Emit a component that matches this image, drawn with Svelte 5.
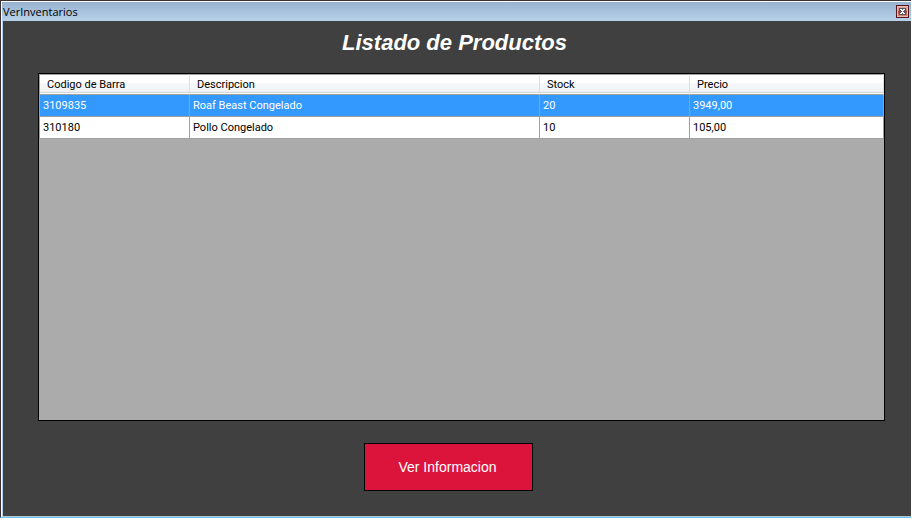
<script>
  const columns = [
    { key: 'codigo', label: 'Codigo de Barra' },
    { key: 'descripcion', label: 'Descripcion' },
    { key: 'stock', label: 'Stock' },
    { key: 'precio', label: 'Precio' }
  ];
  const products = [
    { codigo: '3109835', descripcion: 'Roaf Beast Congelado', stock: '20', precio: '3949,00' },
    { codigo: '310180', descripcion: 'Pollo Congelado', stock: '10', precio: '105,00' }
  ];
  let selected = $state(0);
</script>

<div class="window">
  <header class="titlebar">
    <span class="caption">VerInventarios</span>
    <button class="close" type="button" aria-label="Cerrar">
      <svg width="13" height="13" viewBox="0 0 13 13" shape-rendering="crispEdges">
        <defs>
          <linearGradient id="closeFill" x1="0" y1="0" x2="0" y2="1">
            <stop offset="0" stop-color="#dfa69b" />
            <stop offset="0.45" stop-color="#cf7c6c" />
            <stop offset="0.5" stop-color="#b84a34" />
            <stop offset="1" stop-color="#d48672" />
          </linearGradient>
        </defs>
        <rect width="13" height="13" rx="1" fill="#51191f" />
        <rect x="1" y="1" width="11" height="11" fill="#e5b8b0" />
        <rect x="2" y="2" width="9" height="9" fill="url(#closeFill)" />
        <path d="M3 3h7v7h-7z" fill="#535666" />
        <path d="M4 4h2v1h1v-1h2v1h-1v1h-1v1h1v1h1v1h-2v-1h-1v1h-2v-1h1v-1h1v-1h-1v-1h-1z" fill="#fff" />
      </svg>
    </button>
  </header>

  <main>
    <h1>Listado de Productos</h1>
    <div class="grid">
      <table>
        <colgroup>
          <col class="narrow" />
          <col class="wide" />
          <col class="narrow" />
          <col />
        </colgroup>
        <thead>
          <tr>
            {#each columns as column}
              <th scope="col">{column.label}</th>
            {/each}
          </tr>
        </thead>
        <tbody>
          {#each products as product, i}
            <tr class:selected={selected === i} onclick={() => (selected = i)}>
              {#each columns as column}
                <td>{product[column.key]}</td>
              {/each}
            </tr>
          {/each}
        </tbody>
      </table>
    </div>
    <button class="info" type="button">Ver Informacion</button>
  </main>
</div>

<style>
  :global(body) {
    background: #fff;
  }
  .window {
    box-sizing: border-box;
    margin-right: 1px;
    border-top: 1px solid #3a3134;
    border-left: 1px solid #3a3134;
    border-bottom: 1px solid #6cc5ee;
    background: #404040;
    font-family: 'Liberation Sans', Arial, sans-serif;
  }
  .titlebar {
    display: flex;
    align-items: center;
    justify-content: space-between;
    box-sizing: border-box;
    height: 20px;
    padding: 0 2px 0 1px;
    border-top: 1px solid #fff;
    border-left: 1px solid #fff;
    background: linear-gradient(#98b3d0, #b8d1ea);
  }
  .caption {
    font: 11px/18px 'Open Sans', 'Noto Sans', sans-serif;
    color: #000;
  }
  .close {
    display: flex;
    padding: 0;
    border: 0;
    background: none;
  }
  main {
    display: flex;
    flex-direction: column;
    align-items: center;
    margin-left: 1px;
    padding: 8px 26px 25px 35px;
    border-left: 1px solid #b3cfee;
    border-bottom: 1px solid #b0c4d8;
    box-shadow: -1px 0 #fff;
  }
  h1 {
    margin: 0 14px 16px 0;
    font-size: 22px;
    line-height: 28px;
    font-weight: bold;
    font-style: italic;
    color: #fff;
  }
  .grid {
    box-sizing: border-box;
    width: 100%;
    height: 348px;
    border: 1px solid #000;
    background: #ababab;
  }
  table {
    width: 100%;
    table-layout: fixed;
    border-collapse: separate;
    border-spacing: 0;
    border-left: 1px solid #a0a0a0;
    font-family: Roboto, 'Liberation Sans', sans-serif;
    font-size: 11px;
    line-height: 14px;
  }
  .narrow {
    width: 150px;
  }
  .wide {
    width: 350px;
  }
  th {
    box-sizing: border-box;
    height: 21px;
    padding: 1px 7px 0;
    border-top: 1px solid #a0a0a0;
    border-right: 1px solid #dedfe1;
    border-bottom: 1px solid #a0a0a0;
    background: linear-gradient(#fff 40%, #f7f8fa 41%, #f1f2f4 88%, #d5d5d5 89%, #d5d5d5 94%, #fff 95%);
    font-weight: normal;
    text-align: left;
    color: #000;
  }
  td {
    box-sizing: border-box;
    height: 22px;
    padding: 0 3px;
    border-right: 1px solid #a0a0a0;
    border-bottom: 1px solid #a0a0a0;
    background: #fff;
    color: #000;
  }
  .selected td {
    background: #3399ff;
    color: #fff;
  }
  .info {
    box-sizing: border-box;
    width: 169px;
    height: 48px;
    margin: 22px 26px 0 0;
    padding: 0 2px 0 0;
    border: 1px solid #000;
    background: #dc143c;
    font: 14px 'Liberation Sans', Arial, sans-serif;
    color: #fff;
  }
</style>
